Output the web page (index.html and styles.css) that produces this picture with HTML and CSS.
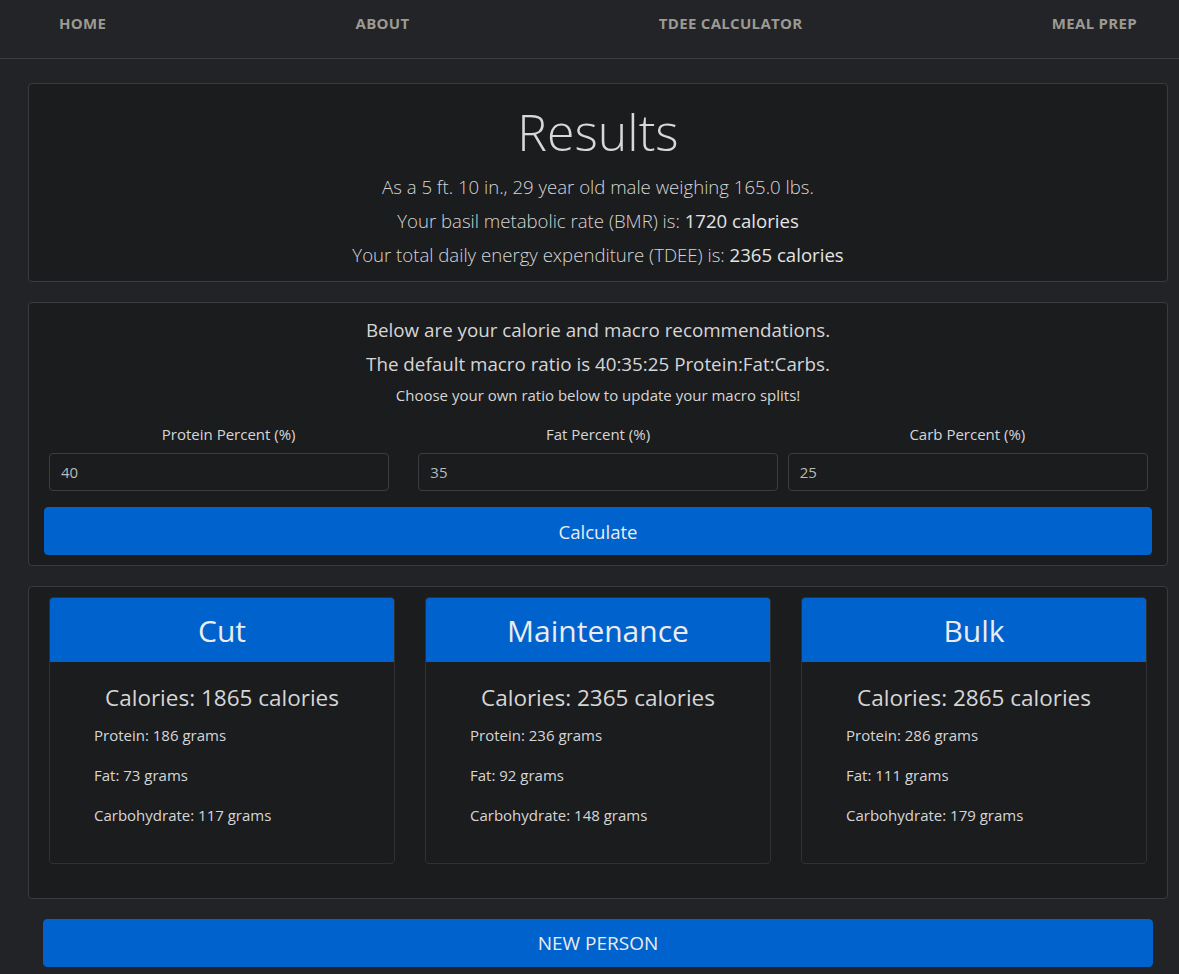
FILE: index.html
```html
<!DOCTYPE html>
<html lang="en">
<head>
<meta charset="utf-8">
<title>TDEE Results</title>
<link rel="stylesheet" href="styles.css">
</head>
<body>
<nav class="topnav">
  <ul class="nav-list">
    <li><a href="#">Home</a></li>
    <li><a href="#">About</a></li>
    <li><a href="#">TDEE Calculator</a></li>
    <li><a href="#">Meal Prep</a></li>
  </ul>
</nav>
<main class="container">
  <section class="panel results">
    <h1 class="results-title">Results</h1>
    <p class="lead">As a 5 ft. 10 in., 29 year old male weighing 165.0 lbs.</p>
    <p class="lead">Your basil metabolic rate (BMR) is: <b>1720 calories</b></p>
    <p class="lead">Your total daily energy expenditure (TDEE) is: <b>2365 calories</b></p>
  </section>

  <section class="panel macros">
    <p class="macro-line">Below are your calorie and macro recommendations.</p>
    <p class="macro-line">The default macro ratio is 40:35:25 Protein:Fat:Carbs.</p>
    <p class="macro-hint">Choose your own ratio below to update your macro splits!</p>
    <form class="ratio-form">
      <div class="ratio-grid">
        <div class="ratio-col">
          <label class="ratio-label" for="protein">Protein Percent (%)</label>
          <input class="ratio-input ratio-input-first" id="protein" type="text" value="40">
        </div>
        <div class="ratio-col">
          <label class="ratio-label" for="fat">Fat Percent (%)</label>
          <input class="ratio-input ratio-input-mid" id="fat" type="text" value="35">
        </div>
        <div class="ratio-col">
          <label class="ratio-label" for="carb">Carb Percent (%)</label>
          <input class="ratio-input ratio-input-last" id="carb" type="text" value="25">
        </div>
      </div>
      <button class="btn btn-calc" type="button">Calculate</button>
    </form>
  </section>

  <section class="panel plans">
    <div class="plan-grid">
      <div class="plan-card">
        <div class="plan-head">Cut</div>
        <div class="plan-body">
          <h3 class="plan-cal">Calories: 1865 calories</h3>
          <ul class="plan-list">
            <li>Protein: 186 grams</li>
            <li>Fat: 73 grams</li>
            <li>Carbohydrate: 117 grams</li>
          </ul>
        </div>
      </div>
      <div class="plan-card">
        <div class="plan-head">Maintenance</div>
        <div class="plan-body">
          <h3 class="plan-cal">Calories: 2365 calories</h3>
          <ul class="plan-list">
            <li>Protein: 236 grams</li>
            <li>Fat: 92 grams</li>
            <li>Carbohydrate: 148 grams</li>
          </ul>
        </div>
      </div>
      <div class="plan-card">
        <div class="plan-head">Bulk</div>
        <div class="plan-body">
          <h3 class="plan-cal">Calories: 2865 calories</h3>
          <ul class="plan-list">
            <li>Protein: 286 grams</li>
            <li>Fat: 111 grams</li>
            <li>Carbohydrate: 179 grams</li>
          </ul>
        </div>
      </div>
    </div>
  </section>

  <div class="new-row">
    <button class="btn btn-new" type="button">NEW PERSON</button>
  </div>
</main>
</body>
</html>
```

FILE: styles.css
```css
* { box-sizing: border-box; }

html, body {
  margin: 0;
  padding: 0;
  background: #222326;
  color: #d6d6d6;
  font-family: "Open Sans", "Noto Sans", sans-serif;
}

.topnav {
  height: 59px;
  border-bottom: 1px solid #3b3c3f;
  background: #232427;
}

.nav-list {
  list-style: none;
  margin: 0;
  padding: 0 42px 0 59px;
  height: 58px;
  display: flex;
  justify-content: space-between;
  align-items: center;
}

.nav-list li { display: block; }

.nav-list a {
  display: block;
  color: #9c9a92;
  text-decoration: none;
  text-transform: uppercase;
  font-weight: 700;
  font-size: 15px;
  letter-spacing: 0.3px;
  padding-bottom: 13px;
}

.container {
  width: 1140px;
  margin: 0 0 0 28px;
  padding: 24px 0 7px;
}

.panel {
  background: #1b1c1e;
  border: 1px solid #3a3b3e;
  border-radius: 4px;
  margin-bottom: 20px;
}

.results {
  padding: 12px 16px 9px;
  text-align: center;
}

.results-title {
  margin: 0 0 2px;
  font-size: 50px;
  font-weight: 300;
  line-height: 72px;
  color: #d8d8d8;
}

.lead {
  margin: 0;
  font-size: 18.6px;
  font-weight: 300;
  line-height: 34px;
  color: #d6d6d6;
}

.lead b { font-weight: 500; color: #e4e4e4; }

.macros {
  padding: 10px 15px 10px;
  text-align: center;
}

.macro-line {
  margin: 0;
  font-size: 18.8px;
  line-height: 34px;
  color: #d6d6d6;
}

.macro-hint {
  margin: 0 0 14px;
  font-size: 15px;
  line-height: 28px;
  color: #d6d6d6;
}

.ratio-form { margin: 0; }

.ratio-grid {
  display: grid;
  grid-template-columns: repeat(3, 1fr);
}

.ratio-col {
  display: flex;
  flex-direction: column;
}

.ratio-label {
  font-size: 15px;
  line-height: 22px;
  margin-bottom: 8px;
  color: #d6d6d6;
}

.ratio-input {
  height: 38px;
  background: #1b1c1e;
  border: 1px solid #3c3d40;
  border-radius: 4px;
  color: #b9b9b9;
  font-family: inherit;
  font-size: 15px;
  padding: 0 11px;
  outline: none;
}

.ratio-input-first { margin: 0 24px 0 5px; }
.ratio-input-mid { margin: 0 5px 0 5px; }
.ratio-input-last { margin: 0 4px 0 5px; }

.btn {
  display: block;
  width: 100%;
  border: 1px solid #0062cc;
  background: #0062cc;
  border-radius: 4px;
  color: #ececec;
  font-family: inherit;
  cursor: pointer;
}

.btn-calc {
  margin-top: 16px;
  height: 48px;
  font-size: 18.6px;
}

.plans {
  padding: 10px 20px 34px;
}

.plan-grid {
  display: grid;
  grid-template-columns: repeat(3, 1fr);
  gap: 30px;
}

.plan-card {
  border: 1px solid #2f3033;
  border-radius: 4px;
  overflow: hidden;
  background: #1b1c1e;
}

.plan-head {
  background: #0062cc;
  height: 64px;
  line-height: 64px;
  padding-top: 1px;
  text-align: center;
  font-size: 30px;
  color: #ececec;
}

.plan-body {
  padding: 19px 4px 36px;
}

.plan-cal {
  margin: 0 0 8px;
  text-align: center;
  font-size: 22.5px;
  font-weight: 400;
  line-height: 34px;
  color: #d6d6d6;
}

.plan-list {
  list-style: none;
  margin: 0;
  padding: 0 0 0 40px;
}

.plan-list li {
  font-size: 15px;
  line-height: 24px;
  margin-bottom: 16px;
  color: #d6d6d6;
}

.plan-list li:last-child { margin-bottom: 0; }

.new-row {
  padding: 0 15px;
}

.btn-new {
  height: 48px;
  font-size: 19px;
}
```
